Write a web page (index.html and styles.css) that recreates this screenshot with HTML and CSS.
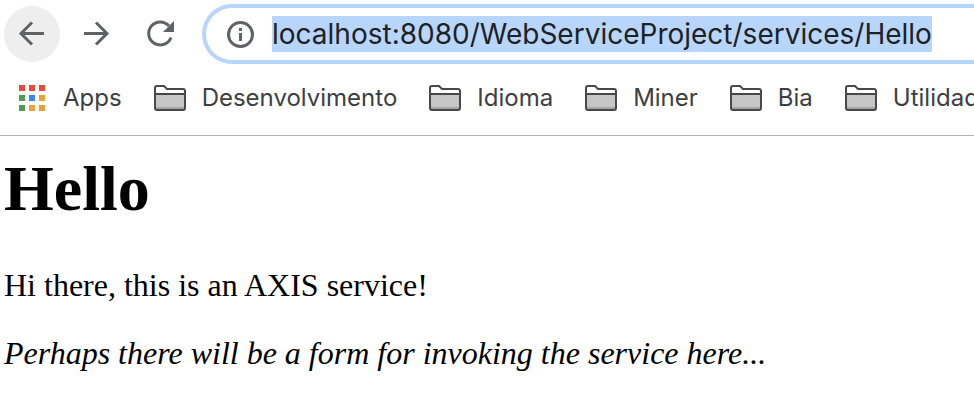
FILE: index.html
```html
<!DOCTYPE html>
<html lang="pt-BR">
<head>
<meta charset="utf-8">
<title>Hello</title>
<link rel="stylesheet" href="styles.css">
</head>
<body>
<svg class="sprite" aria-hidden="true">
  <symbol id="folder" viewBox="0 0 32 26">
    <path d="M1 3Q1 1 3 1H10L13 4H29Q31 4 31 6V23Q31 25 29 25H3Q1 25 1 23Z" fill="#fff"/>
    <path d="M1 8H31V24H1Z" fill="#c6c6c6"/>
    <path d="M1 22H31V24H1Z" fill="#a6a6a6"/>
    <path d="M1 9H31M1 3Q1 1 3 1H10L13 4H29Q31 4 31 6V23Q31 25 29 25H3Q1 25 1 23Z" fill="none" stroke="#484848" stroke-width="2"/>
  </symbol>
</svg>
<header class="browser">
  <div class="toolbar">
    <nav class="controls" aria-label="Navegação">
      <button class="control control-active" type="button" aria-label="Voltar">
        <svg class="glyph" viewBox="0 0 32 32"><path d="M28 15.500H5M16 4.500L5 15.500L16 26.500"/></svg>
      </button>
      <button class="control" type="button" aria-label="Avançar">
        <svg class="glyph" viewBox="0 0 32 32"><path d="M4 15.500H27M16 4.500L27 15.500L16 26.500"/></svg>
      </button>
      <button class="control" type="button" aria-label="Recarregar">
        <svg class="glyph" viewBox="0 0 32 32"><path d="M27 19.500A11.500 11.500 0 1 1 25 8"/><path class="solid" d="M30 3V14H19Z"/></svg>
      </button>
    </nav>
    <div class="omnibox">
      <button class="info" type="button" aria-label="Informações do site">
        <svg class="glyph" viewBox="0 0 32 32"><circle cx="16.500" cy="16.500" r="12"/><path class="solid" d="M15 15H18V23H15ZM15 10H18V13H15Z"/></svg>
      </button>
      <input class="url" type="text" aria-label="Endereço" spellcheck="false" value="localhost:8080/WebServiceProject/services/Hello">
    </div>
  </div>
  <nav class="bookmarks" aria-label="Favoritos">
    <a class="bookmark" href="#">
      <svg class="apps" viewBox="0 0 26 26" aria-hidden="true">
        <path fill="#e34b3d" d="M0 0h6v6H0zM10 0h6v6h-6zM20 0h6v6h-6z"/>
        <path fill="#529a5a" d="M0 10h6v6H0zM0 20h6v6H0z"/>
        <path fill="#3b87ec" d="M10 10h6v6h-6z"/>
        <path fill="#e7a336" d="M20 10h6v6h-6zM10 20h6v6h-6zM20 20h6v6h-6z"/>
      </svg>Apps</a>
    <a class="bookmark" href="#"><svg class="folder"><use href="#folder"/></svg>Desenvolvimento</a>
    <a class="bookmark" href="#"><svg class="folder"><use href="#folder"/></svg>Idioma</a>
    <a class="bookmark" href="#"><svg class="folder"><use href="#folder"/></svg>Miner</a>
    <a class="bookmark" href="#"><svg class="folder"><use href="#folder"/></svg>Bia</a>
    <a class="bookmark" href="#"><svg class="folder"><use href="#folder"/></svg>Utilidades</a>
  </nav>
</header>
<main class="page">
  <h1 class="title">Hello</h1>
  <p class="text">Hi there, this is an AXIS service!</p>
  <p class="text"><i>Perhaps there will be a form for invoking the service here...</i></p>
</main>
</body>
</html>
```
FILE: styles.css
```css
* {
  box-sizing: border-box;
}

body {
  margin: 0;
  overflow-x: hidden;
  background: #fff;
  color: #000;
}

.sprite {
  display: none;
}

.browser {
  border-bottom: 1px solid #b4b4b4;
  font-family: Inter, Roboto, "Liberation Sans", sans-serif;
}

.toolbar {
  display: flex;
  align-items: center;
  gap: 14px;
  padding: 4px 0 4px 4px;
}

.controls {
  display: flex;
  gap: 8px;
}

.control,
.info {
  display: grid;
  place-items: center;
  padding: 0;
  border: 0;
  background: none;
}

.control {
  width: 56px;
  height: 56px;
  border-radius: 50%;
}

.control-active {
  background: #eee;
}

.glyph {
  width: 32px;
  height: 32px;
  fill: none;
  stroke: #5f6368;
  stroke-width: 3;
}

.solid {
  fill: #5f6368;
  stroke: none;
}

.omnibox {
  display: flex;
  flex: 1;
  align-items: center;
  gap: 16px;
  height: 60px;
  padding-left: 18px;
  border: 4px solid #b8d6fb;
  border-right: 0;
  border-radius: 30px 0 0 30px;
}

.url {
  field-sizing: content;
  min-width: 0;
  height: 36px;
  padding: 0;
  border: 0;
  outline: 0;
  background: #b8d6fb;
  color: #202124;
  font-family: inherit;
  font-size: 28px;
}

.bookmarks {
  display: flex;
  align-items: center;
  gap: 32px;
  height: 67px;
  padding: 0 0 8px 19px;
}

.bookmark {
  display: flex;
  flex: none;
  align-items: center;
  gap: 16px;
  color: #3c4043;
  font-size: 24px;
  line-height: 32px;
  text-decoration: none;
}

.apps {
  width: 26px;
  height: 26px;
  margin-right: 2px;
}

.folder {
  width: 32px;
  height: 26px;
}

.page {
  padding: 15px 4px;
  font-family: "Liberation Serif", serif;
}

.title {
  margin: 0 0 40px;
  font-size: 64px;
  line-height: 76px;
}

.text {
  margin: 0 0 32px;
  font-size: 32px;
  line-height: 36px;
}
```
